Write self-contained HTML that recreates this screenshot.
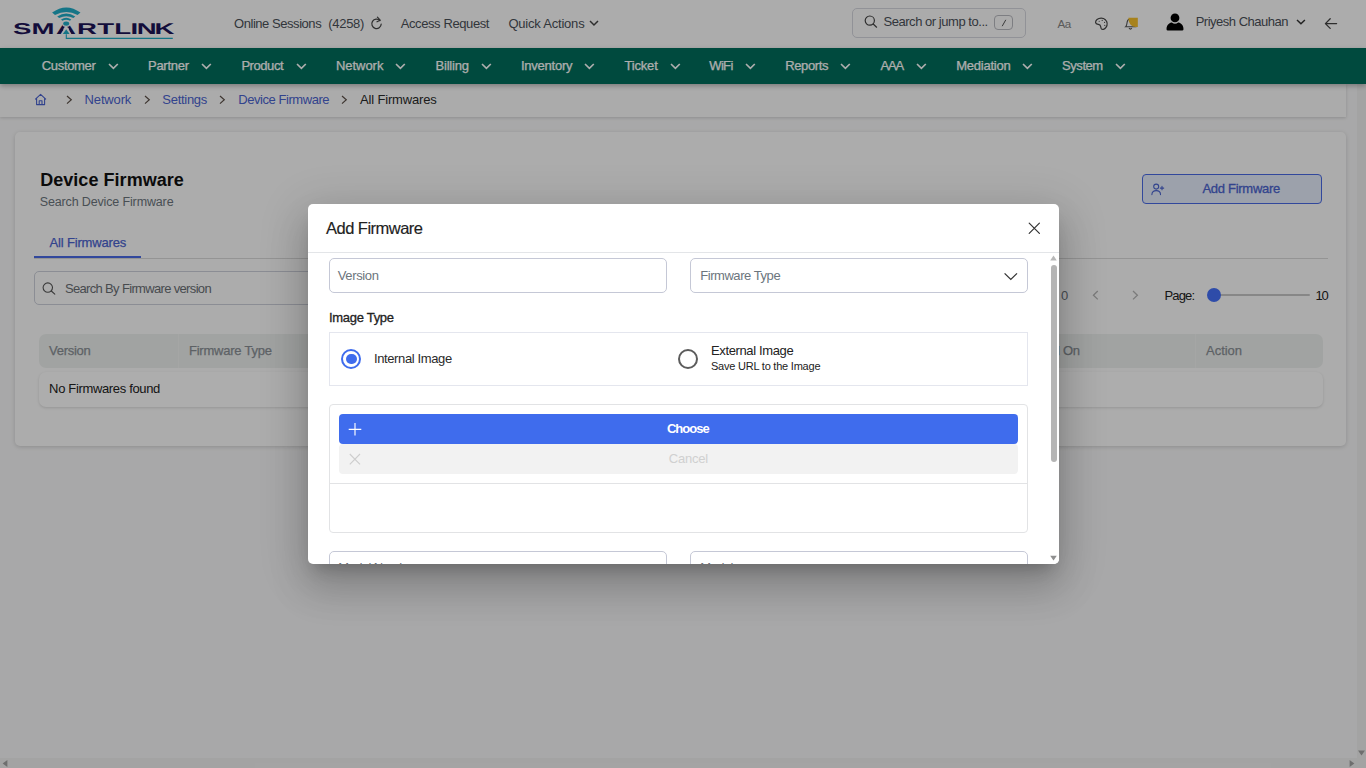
<!DOCTYPE html>
<html lang="en">
<head>
<meta charset="utf-8">
<title>Device Firmware</title>
<style>
*{box-sizing:border-box;margin:0;padding:0}
html,body{width:1366px;height:768px;overflow:hidden;background:#f7f8f9;font-family:"Liberation Sans",Arial,sans-serif;color:#333;font-size:13px}
.abs{position:absolute}
svg{overflow:visible}
#app{position:absolute;left:0;top:0;width:1366px;height:768px;overflow:hidden;background:#f8f8f9}
.t{position:absolute;white-space:nowrap;line-height:1}
#hdr{position:absolute;left:0;top:0;width:1366px;height:48px;background:#fefefe;z-index:3}
#nav{position:absolute;left:0;top:48px;width:1366px;height:36px;background:#006e5c;box-shadow:0 2px 5px rgba(0,0,0,.28);z-index:4}
#crumb{position:absolute;left:0;top:84px;width:1346px;height:32.6px;background:#fdfdfd;box-shadow:0 1px 3px rgba(0,0,0,.16);z-index:2}
#card{position:absolute;left:15px;top:132px;width:1331px;height:314px;background:#fefefe;border-radius:5px;box-shadow:0 1px 4px rgba(0,0,0,.16)}
#cardc{position:absolute;left:0;top:0;width:1357px;height:758px}
#vsb{position:absolute;left:1357px;top:84px;width:9px;height:684px;background:#f1f1f1}
#hsb{position:absolute;left:0;top:758px;width:1357px;height:10px;background:#f1f1f1}
#mask{position:absolute;left:0;top:0;width:1366px;height:768px;background:rgba(0,0,0,.32);z-index:10}
#modal{position:absolute;left:308px;top:203.6px;width:751px;height:360.4px;background:#fff;border-radius:5px;box-shadow:0 11px 15px -7px rgba(0,0,0,.2),0 24px 38px 3px rgba(0,0,0,.14),0 9px 46px 8px rgba(0,0,0,.12);overflow:hidden;z-index:11}
</style>
</head>
<body>
<div id="app">
  <div id="hdr">
    <svg class="abs" style="left:10px;top:4px" width="170" height="40" viewBox="10 4 170 40">
      <g fill="#1fadc8">
        <path d="M52.1 12.6 Q66.3 2.2 80.5 12.6 L77.6 15 Q66.3 8.8 55 15 Z"/>
        <path d="M57.2 16.4 Q66.3 10.4 75.3 16.4 L73.4 18.1 Q66.3 14.6 59.2 18.1 Z"/>
        <path d="M61 19.6 Q66.2 16 71.3 19.6 L70 20.8 Q66.2 18.6 62.4 20.8 Z"/>
      </g>
      <path d="M66.3 33.5 V38.4 H172.8" stroke-width="1.1" fill="none" stroke="#1fadc8"/>
      <text text-rendering="geometricPrecision" transform="scale(1.769,1)" x="7.38 17.76 31.69 43.50 55.01 64.62 73.71 77.29 87.30" y="34" font-family="Liberation Sans, Arial, sans-serif" font-weight="bold" font-size="15.6" fill="#1c1458">SMARTLINK</text>
      <path d="M64.2 27.6 H68.2 L71 34.2 H61.4 Z" fill="#fefefe"/>
      <ellipse cx="66.2" cy="23.7" rx="4.1" ry="3.2" fill="#fefefe"/>
      <ellipse cx="66.2" cy="23.6" rx="3" ry="2.2" fill="#1fadc8"/>
      <path d="M66.2 29.2 L69.6 33.9 H62.8 Z" fill="#1fadc8"/>
    </svg>
    <div class="t" style="left:234.0px;top:17.0px;font-size:13px;color:#4b5058;letter-spacing:-0.45px;">Online Sessions</div>
    <div class="t" style="left:328.3px;top:17.0px;font-size:13px;color:#4b5058;letter-spacing:-0.30px;">(4258)</div>
    <svg class="abs" style="left:370px;top:16px" width="13" height="14" viewBox="0 0 13 14" fill="none" stroke="#444" stroke-width="1.2" stroke-linecap="round"><path d="M9.9 4.6 A4.7 4.7 0 1 0 11.2 8"/><path d="M7.4 1.2 L10.2 4.2 L7 5.8" stroke-linejoin="round"/></svg>
    <div class="t" style="left:400.7px;top:17.0px;font-size:13px;color:#4b5058;letter-spacing:-0.40px;">Access Request</div>
    <div class="t" style="left:508.4px;top:17.0px;font-size:13px;color:#4b5058;letter-spacing:-0.21px;">Quick Actions</div>
    <svg class="abs" style="left:588.6px;top:20.2px" width="10" height="6.6" viewBox="-1 -1 10 6.6" fill="none" stroke="#444" stroke-width="1.5"><path d="M0 0 L4.0 3.9999999999999996 L8 0"/></svg>
    <div class="abs" style="left:852px;top:8px;width:174px;height:30px;border:1px solid #d6d7df;border-radius:5px;background:#fdfdfd"></div>
    <svg class="abs" style="left:864px;top:15px" width="14" height="13" viewBox="0 0 14 13" fill="none" stroke="#444" stroke-width="1.2"><circle cx="5.8" cy="5.6" r="4.6"/><path d="M9.2 9 L12.6 12.2" stroke-linecap="round"/></svg>
    <div class="t" style="left:883.5px;top:15.0px;font-size:13px;color:#4b5058;letter-spacing:-0.46px;">Search or jump to...</div>
    <div class="abs" style="left:994px;top:15px;width:19px;height:15px;border:1px solid #b9bac0;border-radius:4px"></div>
    <svg class="abs" style="left:1001px;top:19px" width="6" height="8" viewBox="0 0 6 8" stroke="#555" stroke-width="1" fill="none"><path d="M1.2 7.2 L4.8 .8"/></svg>
    <div class="t" style="left:1057.6px;top:18.2px;font-size:11.6px;color:#858585;letter-spacing:-0.59px;">Aa</div>
    <svg class="abs" style="left:1094px;top:17px" width="15" height="14" viewBox="0 0 15 14" fill="none" stroke="#444" stroke-width="1.2" stroke-linejoin="round"><path d="M7.2 1.2 C3.8 1.2 1.3 3.4 1.6 5.6 C1.9 7.4 3.8 7.2 5.2 7.6 C6.8 8 6.4 9.6 7.2 11.4 C8 13 10.6 12.6 12 10.4 C13.6 7.8 13.2 4.6 11.4 2.8 C10.2 1.7 8.8 1.2 7.2 1.2 Z"/><circle cx="5.2" cy="4.2" r=".55" fill="#444" stroke="none"/><circle cx="8.2" cy="3.4" r=".55" fill="#444" stroke="none"/><circle cx="10.6" cy="5.4" r=".55" fill="#444" stroke="none"/><circle cx="10.8" cy="8.4" r=".55" fill="#444" stroke="none"/></svg>
    <svg class="abs" style="left:1124px;top:17px" width="15" height="14" viewBox="0 0 15 14"><path d="M1.6 9.8 C3 8.6 2.8 6.6 3.2 4.8 C3.6 3 4.8 2 6.4 2 C8 2 9.2 3 9.6 4.8 C10 6.6 9.8 8.6 11.2 9.8 Z M5 11.2 Q6.4 13 7.8 11.2" fill="none" stroke="#555" stroke-width="1.1"/><path d="M4.4 .8 H13.8 V10 H11.6 C7.4 10 4.4 6.4 4.4 .8 Z" fill="#f6c02a"/></svg>
    <svg class="abs" style="left:1166px;top:13px" width="18" height="18" viewBox="0 0 18 18" fill="#000"><circle cx="9" cy="4.9" r="4.4"/><path d="M.5 16.2 C.5 11.8 3.8 9.6 5.8 9.6 Q9 12 12.2 9.6 C14.2 9.6 17.5 11.8 17.5 16.2 Q17.5 17.6 16.1 17.6 H1.9 Q.5 17.6 .5 16.2 Z"/></svg>
    <div class="t" style="left:1195.7px;top:15.0px;font-size:13px;color:#4b5058;letter-spacing:-0.50px;">Priyesh Chauhan</div>
    <svg class="abs" style="left:1295.9px;top:18.8px" width="9.9" height="6.4" viewBox="-1 -1 9.9 6.4" fill="none" stroke="#333" stroke-width="1.5"><path d="M0 0 L3.95 3.8000000000000003 L7.9 0"/></svg>
    <svg class="abs" style="left:1324px;top:17px" width="14" height="13" viewBox="0 0 14 13" fill="none" stroke="#444" stroke-width="1.3" stroke-linecap="round" stroke-linejoin="round"><path d="M12.6 6.6 H1.6 M6.2 1.8 L1.4 6.6 L6.2 11.4"/></svg>
  </div>
  <div id="nav">
    <div class="t" style="left:41.7px;top:11.1px;font-size:13px;color:#fff;letter-spacing:-0.31px;-webkit-text-stroke:.25px #fff;">Customer</div><svg class="abs" style="left:107.7px;top:15px" width="10.8" height="6.9" viewBox="-1 -1 10.8 6.9" fill="none" stroke="#fff" stroke-width="1.7"><path d="M0 0 L4.4 4.300000000000001 L8.8 0"/></svg>
    <div class="t" style="left:148.0px;top:11.1px;font-size:13px;color:#fff;letter-spacing:-0.27px;-webkit-text-stroke:.25px #fff;">Partner</div><svg class="abs" style="left:201.1px;top:15px" width="10.8" height="6.9" viewBox="-1 -1 10.8 6.9" fill="none" stroke="#fff" stroke-width="1.7"><path d="M0 0 L4.4 4.300000000000001 L8.8 0"/></svg>
    <div class="t" style="left:241.4px;top:11.1px;font-size:13px;color:#fff;letter-spacing:-0.44px;-webkit-text-stroke:.25px #fff;">Product</div><svg class="abs" style="left:295.7px;top:15px" width="10.8" height="6.9" viewBox="-1 -1 10.8 6.9" fill="none" stroke="#fff" stroke-width="1.7"><path d="M0 0 L4.4 4.300000000000001 L8.8 0"/></svg>
    <div class="t" style="left:336.0px;top:11.1px;font-size:13px;color:#fff;letter-spacing:-0.05px;-webkit-text-stroke:.25px #fff;">Network</div><svg class="abs" style="left:395.2px;top:15px" width="10.8" height="6.9" viewBox="-1 -1 10.8 6.9" fill="none" stroke="#fff" stroke-width="1.7"><path d="M0 0 L4.4 4.300000000000001 L8.8 0"/></svg>
    <div class="t" style="left:435.5px;top:11.1px;font-size:13px;color:#fff;letter-spacing:-0.21px;-webkit-text-stroke:.25px #fff;">Billing</div><svg class="abs" style="left:481.2px;top:15px" width="10.8" height="6.9" viewBox="-1 -1 10.8 6.9" fill="none" stroke="#fff" stroke-width="1.7"><path d="M0 0 L4.4 4.300000000000001 L8.8 0"/></svg>
    <div class="t" style="left:521.0px;top:11.1px;font-size:13px;color:#fff;letter-spacing:-0.24px;-webkit-text-stroke:.25px #fff;">Inventory</div><svg class="abs" style="left:584.4000000000001px;top:15px" width="10.8" height="6.9" viewBox="-1 -1 10.8 6.9" fill="none" stroke="#fff" stroke-width="1.7"><path d="M0 0 L4.4 4.300000000000001 L8.8 0"/></svg>
    <div class="t" style="left:624.4px;top:11.1px;font-size:13px;color:#fff;letter-spacing:-0.16px;-webkit-text-stroke:.25px #fff;">Ticket</div><svg class="abs" style="left:669.9000000000001px;top:15px" width="10.8" height="6.9" viewBox="-1 -1 10.8 6.9" fill="none" stroke="#fff" stroke-width="1.7"><path d="M0 0 L4.4 4.300000000000001 L8.8 0"/></svg>
    <div class="t" style="left:709.3px;top:11.1px;font-size:13px;color:#fff;letter-spacing:-0.67px;-webkit-text-stroke:.25px #fff;">WiFi</div><svg class="abs" style="left:744.8000000000001px;top:15px" width="10.8" height="6.9" viewBox="-1 -1 10.8 6.9" fill="none" stroke="#fff" stroke-width="1.7"><path d="M0 0 L4.4 4.300000000000001 L8.8 0"/></svg>
    <div class="t" style="left:785.2px;top:11.1px;font-size:13px;color:#fff;letter-spacing:-0.36px;-webkit-text-stroke:.25px #fff;">Reports</div><svg class="abs" style="left:840.4000000000001px;top:15px" width="10.8" height="6.9" viewBox="-1 -1 10.8 6.9" fill="none" stroke="#fff" stroke-width="1.7"><path d="M0 0 L4.4 4.300000000000001 L8.8 0"/></svg>
    <div class="t" style="left:880.4px;top:11.1px;font-size:13px;color:#fff;letter-spacing:-1.16px;-webkit-text-stroke:.25px #fff;">AAA</div><svg class="abs" style="left:915.6px;top:15px" width="10.8" height="6.9" viewBox="-1 -1 10.8 6.9" fill="none" stroke="#fff" stroke-width="1.7"><path d="M0 0 L4.4 4.300000000000001 L8.8 0"/></svg>
    <div class="t" style="left:956.2px;top:11.1px;font-size:13px;color:#fff;letter-spacing:-0.23px;-webkit-text-stroke:.25px #fff;">Mediation</div><svg class="abs" style="left:1022.2px;top:15px" width="10.8" height="6.9" viewBox="-1 -1 10.8 6.9" fill="none" stroke="#fff" stroke-width="1.7"><path d="M0 0 L4.4 4.300000000000001 L8.8 0"/></svg>
    <div class="t" style="left:1062.0px;top:11.1px;font-size:13px;color:#fff;letter-spacing:-0.43px;-webkit-text-stroke:.25px #fff;">System</div><svg class="abs" style="left:1115.3px;top:15px" width="10.8" height="6.9" viewBox="-1 -1 10.8 6.9" fill="none" stroke="#fff" stroke-width="1.7"><path d="M0 0 L4.4 4.300000000000001 L8.8 0"/></svg>
  </div>
  <div id="crumb">
    <svg class="abs" style="left:34px;top:9px" width="14" height="13" viewBox="0 0 14 13" fill="none" stroke="#4a63d0" stroke-width="1.1" stroke-linejoin="round"><path d="M1.2 6.4 L6.6 1.4 L12 6.4 M2.6 5.4 V11.6 H10.6 V5.4 M5.2 11.6 V7.8 H8 V11.6"/></svg>
    <svg class="abs" style="left:65.7px;top:11px" width="6.7" height="9.6" viewBox="-1 -1 6.7 9.6" fill="none" stroke="#5c5048" stroke-width="1.2"><path d="M0 0 L4.3 3.8 L0 7.6"/></svg>
    <div class="t" style="left:84.6px;top:9.0px;font-size:13px;color:#4a63d0;letter-spacing:-0.16px;">Network</div>
    <svg class="abs" style="left:143.5px;top:11px" width="6.7" height="9.6" viewBox="-1 -1 6.7 9.6" fill="none" stroke="#5c5048" stroke-width="1.2"><path d="M0 0 L4.3 3.8 L0 7.6"/></svg>
    <div class="t" style="left:162.3px;top:9.0px;font-size:13px;color:#4a63d0;letter-spacing:-0.28px;">Settings</div>
    <svg class="abs" style="left:219.3px;top:11px" width="6.7" height="9.6" viewBox="-1 -1 6.7 9.6" fill="none" stroke="#5c5048" stroke-width="1.2"><path d="M0 0 L4.3 3.8 L0 7.6"/></svg>
    <div class="t" style="left:238.2px;top:9.0px;font-size:13px;color:#4a63d0;letter-spacing:-0.44px;">Device Firmware</div>
    <svg class="abs" style="left:341.2px;top:11px" width="6.7" height="9.6" viewBox="-1 -1 6.7 9.6" fill="none" stroke="#5c5048" stroke-width="1.2"><path d="M0 0 L4.3 3.8 L0 7.6"/></svg>
    <div class="t" style="left:360.0px;top:9.0px;font-size:13px;color:#2a2a2a;letter-spacing:-0.16px;">All Firmwares</div>
  </div>
  <div id="card"></div>
  <div id="cardc">
    <div class="t" style="left:40.2px;top:170.9px;font-size:18px;color:#111;letter-spacing:0.04px;font-weight:700;">Device Firmware</div>
    <div class="t" style="left:39.7px;top:195.5px;font-size:12.5px;color:#6c757d;letter-spacing:-0.14px;">Search Device Firmware</div>
    <div class="abs" style="left:1142px;top:174px;width:180px;height:30px;border:1px solid #4a6ae6;border-radius:4px;background:#e6eefc"></div>
    <svg class="abs" style="left:1151px;top:183px" width="14" height="13" viewBox="0 0 14 13" fill="none" stroke="#4a63d0" stroke-width="1.1" stroke-linecap="round"><circle cx="5.2" cy="3.6" r="2.5"/><path d="M.9 11.6 C.9 8.6 3 7.6 5.2 7.6 C7.4 7.6 9.5 8.6 9.5 11.6"/><path d="M11 3.4 V6.8 M9.3 5.1 H12.7"/></svg>
    <div class="t" style="left:1202.4px;top:181.9px;font-size:13px;color:#4a63d0;letter-spacing:-0.28px;-webkit-text-stroke:.3px #4a63d0;">Add Firmware</div>
    <div class="t" style="left:49.6px;top:236.4px;font-size:13px;color:#4a63d0;letter-spacing:-0.17px;-webkit-text-stroke:.25px #4a63d0;">All Firmwares</div>
    <div class="abs" style="left:34px;top:258px;width:1294px;height:1px;background:#dadada"></div>
    <div class="abs" style="left:34px;top:256px;width:107px;height:2px;background:#4a6ae6"></div>
    <div class="abs" style="left:34px;top:271px;width:700px;height:34px;border:1px solid #cdd0da;border-radius:5px"></div>
    <svg class="abs" style="left:42px;top:282px" width="14" height="13" viewBox="0 0 14 13" fill="none" stroke="#555" stroke-width="1.1"><circle cx="5.8" cy="5.6" r="4.7"/><path d="M9.3 9 L12.8 12.2" stroke-linecap="round"/></svg>
    <div class="t" style="left:64.9px;top:282.2px;font-size:13px;color:#6a6f75;letter-spacing:-0.66px;">Search By Firmware version</div>
    <div class="t" style="left:1061.0px;top:288.5px;font-size:13px;color:#6c757d;letter-spacing:-0.93px;">0</div>
    <svg class="abs" style="left:1092.3px;top:289.9px" width="6.8" height="10.4" viewBox="-1 -1 6.8 10.4" fill="none" stroke="#b5b5b5" stroke-width="1.3"><path d="M4.8 0 L0.4 4.2 L4.8 8.4"/></svg>
    <svg class="abs" style="left:1131.9px;top:289.9px" width="6.8" height="10.4" viewBox="-1 -1 6.8 10.4" fill="none" stroke="#b5b5b5" stroke-width="1.3"><path d="M0 0 L4.3999999999999995 4.2 L0 8.4"/></svg>
    <div class="t" style="left:1164.5px;top:288.5px;font-size:13px;color:#222;letter-spacing:-0.87px;">Page:</div>
    <div class="abs" style="left:1214px;top:294px;width:96px;height:2px;background:#c8c8c8;border-radius:1px"></div>
    <div class="abs" style="left:1206.5px;top:288px;width:14px;height:14px;border-radius:50%;background:#4470fa"></div>
    <div class="t" style="left:1315.5px;top:288.5px;font-size:13px;color:#222;letter-spacing:-1.20px;">10</div>
    <div class="abs" style="left:39px;top:334px;width:1284px;height:34px;background:#eef1ef;border-radius:7px"></div>
    <div class="abs" style="left:178px;top:334px;width:1px;height:34px;background:#f3f5f3"></div>
    <div class="abs" style="left:1195px;top:334px;width:1px;height:34px;background:#f3f5f3"></div>
    <div class="t" style="left:49.1px;top:344.0px;font-size:13px;color:#8a9096;letter-spacing:-0.28px;-webkit-text-stroke:.25px #8a9096;">Version</div>
    <div class="t" style="left:189.0px;top:344.0px;font-size:13px;color:#8a9096;letter-spacing:-0.23px;-webkit-text-stroke:.25px #8a9096;">Firmware Type</div>
    <div class="t" style="left:1016.0px;top:344.0px;font-size:13px;color:#8a9096;letter-spacing:-0.36px;-webkit-text-stroke:.25px #8a9096;">Created On</div>
    <div class="t" style="left:1206.1px;top:344.0px;font-size:13px;color:#8a9096;letter-spacing:-0.05px;-webkit-text-stroke:.25px #8a9096;">Action</div>
    <div class="abs" style="left:39px;top:372px;width:1284px;height:35px;background:#fff;border-radius:7px;box-shadow:0 1px 3px rgba(0,0,0,.14)"></div>
    <div class="t" style="left:49.1px;top:382.0px;font-size:13px;color:#222;letter-spacing:-0.34px;">No Firmwares found</div>
  </div>
  <div id="vsb"><svg class="abs" style="left:0;top:665px" width="9" height="8" viewBox="0 0 9 8"><path d="M1 1.6 L4.5 6.6 L8 1.6 Z" fill="#a3a3a3"/></svg></div>
  <div id="hsb"><svg class="abs" style="left:1px;top:1px" width="8" height="9" viewBox="0 0 8 9"><path d="M6.4 1 L1.6 4.5 L6.4 8 Z" fill="#a3a3a3"/></svg><svg class="abs" style="left:1348px;top:1px" width="8" height="9" viewBox="0 0 8 9"><path d="M1.6 1 L6.4 4.5 L1.6 8 Z" fill="#a3a3a3"/></svg></div>
  <div id="mask"></div>
  <div id="modal">
    <div class="t" style="left:18.0px;top:16.4px;font-size:16.5px;color:#222;letter-spacing:-0.52px;-webkit-text-stroke:.15px #222;">Add Firmware</div>
    <svg class="abs" style="left:720px;top:18.400000000000006px" width="13" height="13" viewBox="0 0 13 13" fill="none" stroke="#333" stroke-width="1.2" stroke-linecap="round"><path d="M1.2 1.2 L11.4 11.4 M11.4 1.2 L1.2 11.4"/></svg>
    <div class="abs" style="left:0px;top:48.400000000000006px;width:751px;height:1px;background:#e3e5e8"></div>
    <div class="abs" style="left:21px;top:54.400000000000006px;width:338px;height:35px;border:1px solid #c5c8d6;border-radius:5px"></div>
    <div class="t" style="left:29.7px;top:65.4px;font-size:13px;color:#6c757d;letter-spacing:-0.35px;">Version</div>
    <div class="abs" style="left:382px;top:54.400000000000006px;width:338px;height:35px;border:1px solid #c5c8d6;border-radius:5px"></div>
    <div class="t" style="left:392.2px;top:65.4px;font-size:13px;color:#6c757d;letter-spacing:-0.44px;">Firmware Type</div>
    <svg class="abs" style="left:695px;top:68.4px" width="15" height="9" viewBox="0 0 15 9" fill="none" stroke="#333" stroke-width="1.3"><path d="M1.6 1.4 L7.8 7.4 L14 1.4"/></svg>
    <div class="t" style="left:21.0px;top:107.6px;font-size:13px;color:#222;letter-spacing:-0.30px;-webkit-text-stroke:.3px #222;">Image Type</div>
    <div class="abs" style="left:21px;top:128.4px;width:699px;height:54px;border:1px solid #e4e6ee"></div>
    <div class="abs" style="left:33px;top:145.4px;width:20px;height:20px;border-radius:50%;border:2px solid #3f6ced"></div>
    <div class="abs" style="left:38.19999999999999px;top:150.4px;width:10.4px;height:10.4px;border-radius:50%;background:#3f6ced"></div>
    <div class="t" style="left:65.9px;top:148.8px;font-size:13px;color:#2a2a2a;letter-spacing:-0.37px;">Internal Image</div>
    <div class="abs" style="left:370.29999999999995px;top:145.4px;width:20px;height:20px;border-radius:50%;border:2px solid #5c5c5c"></div>
    <div class="t" style="left:403.0px;top:140.6px;font-size:13px;color:#222;letter-spacing:-0.37px;">External Image</div>
    <div class="t" style="left:403.0px;top:157.2px;font-size:11px;color:#222;letter-spacing:-0.22px;">Save URL to the Image</div>
    <div class="abs" style="left:21px;top:200.4px;width:699px;height:129px;border:1px solid #e2e3e5;border-radius:4px"></div>
    <div class="abs" style="left:31px;top:210.4px;width:679px;height:30px;background:#3f6ced;border-radius:4px"></div>
    <svg class="abs" style="left:40px;top:218.4px" width="14" height="14" viewBox="0 0 14 14" fill="none" stroke="#fff" stroke-width="1.15"><path d="M7 1 V13.6 M.7 7.3 H13.3"/></svg>
    <div class="t" style="left:358.9px;top:218.8px;font-size:13px;color:#fff;letter-spacing:-0.95px;font-weight:700;">Choose</div>
    <div class="abs" style="left:31px;top:240.4px;width:679px;height:30px;background:#f2f2f2;border-radius:4px"></div>
    <svg class="abs" style="left:41px;top:249.4px" width="12" height="12" viewBox="0 0 12 12" fill="none" stroke="#cdcdcd" stroke-width="1.1"><path d="M.8 1 L11 11.4 M11 1 L.8 11.4"/></svg>
    <div class="t" style="left:360.8px;top:248.4px;font-size:13px;color:#d0d0d0;letter-spacing:-0.25px;">Cancel</div>
    <div class="abs" style="left:21px;top:279.4px;width:699px;height:1px;background:#e2e3e5"></div>
    <div class="abs" style="left:21px;top:347.4px;width:338px;height:35px;border:1px solid #c5c8d6;border-radius:5px"></div>
    <div class="t" style="left:30.3px;top:357.8px;font-size:13px;color:#6c757d;letter-spacing:-0.60px;">Model Number</div>
    <div class="abs" style="left:382px;top:347.4px;width:338px;height:35px;border:1px solid #c5c8d6;border-radius:5px"></div>
    <div class="t" style="left:392.2px;top:357.8px;font-size:13px;color:#6c757d;letter-spacing:-0.53px;">Model</div>
    <div class="abs" style="left:741px;top:49.599999999999994px;width:10px;height:310.8px;background:#fff"></div>
    <svg class="abs" style="left:741px;top:50.400000000000006px" width="9" height="8" viewBox="0 0 9 8"><path d="M1.2 6.4 L4.5 1.6 L7.8 6.4 Z" fill="#b8b8b8"/></svg>
    <div class="abs" style="left:743px;top:61.400000000000006px;width:6px;height:197px;background:#b5b5b5;border-radius:3px"></div>
    <svg class="abs" style="left:741px;top:350.4px" width="9" height="8" viewBox="0 0 9 8"><path d="M1.2 1.8 L4.5 6.4 L7.8 1.8 Z" fill="#8f8f8f"/></svg>
  </div>
</div>
</body>
</html>
